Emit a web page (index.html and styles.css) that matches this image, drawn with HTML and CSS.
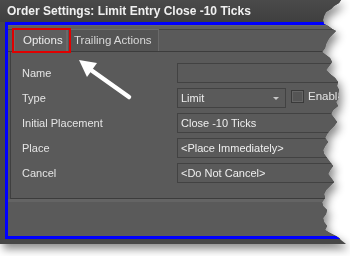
FILE: index.html
```html
<!DOCTYPE html>
<html lang="en">
<head>
    <meta charset="UTF-8">
    <title>Order Settings</title>
    <link rel="stylesheet" href="styles.css">
</head>
<body>
<div class="shot">
    <div class="window">
        <div class="titlebar">Order Settings: Limit Entry Close -10 Ticks</div>
        <div class="frame">
            <div class="tabs">
                <div class="tab active"><span>Options</span></div>
                <div class="tab">Trailing Actions</div>
            </div>
            <div class="panel">
                <div class="row">
                    <label>Name</label>
                    <div class="field"></div>
                </div>
                <div class="row">
                    <label>Type</label>
                    <div class="select">Limit<span class="caret"></span></div>
                    <div class="check"></div>
                    <span class="enable">Enable</span>
                </div>
                <div class="row">
                    <label>Initial Placement</label>
                    <div class="field">Close -10 Ticks</div>
                </div>
                <div class="row">
                    <label>Place</label>
                    <div class="field">&lt;Place Immediately&gt;</div>
                </div>
                <div class="row">
                    <label>Cancel</label>
                    <div class="field">&lt;Do Not Cancel&gt;</div>
                </div>
            </div>
            <div class="footer"></div>
        </div>
    </div>
    <!-- callout arrow pointing at the tab -->
    <svg class="arrow" width="350" height="256" viewBox="0 0 350 256">
        <line x1="129" y1="97" x2="91" y2="70" stroke="#fff" stroke-width="4.5" stroke-linecap="round"/>
        <polygon points="79,60 97,63 87,77" fill="#fff"/>
    </svg>
</div>
</body>
</html>
```

FILE: styles.css
```css
body {
    margin: 0;
    background-color: #FFFFFF;
    font-family: "Liberation Sans", Arial, sans-serif;
}
.shot {
    position: relative;
    width: 350px;
    height: 256px;
    overflow: hidden;
    filter: drop-shadow(3px 5px 4px rgba(0, 0, 0, 0.45));
}
/* torn right edge */
.window {
    width: 346px;
    height: 244px;
    overflow: hidden;
    background-color: #474747;
    clip-path: polygon(0 0, 341px 0, 339px 3px, 334px 6px, 331px 9px, 326px 12px, 324px 16px, 323px 20px, 324px 24px, 328px 26px, 332px 29px, 336px 31px, 333px 34px, 330px 37px, 328px 40px, 326px 44px, 325px 48px, 322px 52px, 326px 55px, 330px 58px, 332px 62px, 329px 66px, 326px 70px, 330px 74px, 335px 78px, 338px 82px, 337px 86px, 339px 90px, 338px 94px, 339px 98px, 336px 102px, 338px 106px, 333px 110px, 331px 114px, 334px 118px, 337px 122px, 334px 126px, 330px 130px, 327px 134px, 325px 138px, 328px 142px, 325px 146px, 323px 150px, 324px 154px, 327px 158px, 330px 162px, 333px 166px, 330px 170px, 328px 174px, 331px 178px, 334px 182px, 330px 186px, 326px 190px, 324px 194px, 325px 198px, 322px 202px, 323px 206px, 327px 210px, 326px 214px, 323px 218px, 324px 222px, 327px 226px, 325px 230px, 330px 233px, 336px 236px, 339px 238px, 341px 240px, 346px 244px, 0 244px);
}
.titlebar {
    height: 22px;
    line-height: 22px;
    padding-left: 7px;
    font-size: 12px;
    font-weight: bold;
    color: #f0f0f0;
    background: linear-gradient(#4a4a4a, #3f3f3f);
    white-space: nowrap;
}
.frame {
    margin-left: 5px;
    width: 345px;
    height: 211px;
    border: 3px solid #0000ff;
    background-color: #5a5a5a;
    display: flex;
    flex-direction: column;
}
.tabs {
    height: 25px;
    display: flex;
    align-items: flex-end;
    padding-left: 6px;
    border-top: 1px solid #666;
    border-bottom: 1px solid #3c3c3c;
    box-shadow: inset 0 3px 0 #5f5f5f, inset 0 4px 0 #444;
}
.tab {
    height: 21px;
    line-height: 21px;
    padding: 0 6px;
    font-size: 11.5px;
    color: #d8d8d8;
    background-color: #545454;
    border: 1px solid #6a6a6a;
    border-bottom: none;
}
.tab.active {
    position: relative;
    width: 43px;
    padding: 0 0 0 8px;
    color: #ececec;
    background-color: #5e5e5e;
}
.tab.active::after {
    content: "";
    position: absolute;
    left: -3px;
    top: -2px;
    width: 55px;
    height: 21px;
    border: 2px solid #e00000;
}
.panel {
    height: 135px;
    margin-left: 2px;
    padding-top: 11px;
    border-left: 1px solid #3f3f3f;
    border-bottom: 1px solid #3c3c3c;
    display: flex;
    flex-direction: column;
    gap: 5px;
}
.row {
    height: 20px;
    display: flex;
    align-items: center;
    font-size: 11px;
    color: #e4e4e4;
}
.row label {
    width: 155px;
    padding-left: 11px;
}
.field, .select {
    height: 18px;
    line-height: 18px;
    padding-left: 3px;
    border: 1px solid #424242;
    color: #eeeeee;
    background-color: #5a5a5a;
}
.field {
    width: 170px;
}
.select {
    width: 104px;
    position: relative;
}
.caret {
    position: absolute;
    right: 6px;
    top: 8px;
    border-left: 3px solid transparent;
    border-right: 3px solid transparent;
    border-top: 3px solid #c8c8c8;
}
.check {
    width: 11px;
    height: 11px;
    margin-left: 5px;
    margin-top: -4px;
    border: 1px solid #3a3a3a;
    background-color: #555;
    box-shadow: inset 0 0 0 1px #666;
}
.enable {
    margin-left: 4px;
    margin-top: -4px;
    font-size: 11.5px;
}
.footer {
    height: 34px;
    border-top: 3px solid #646464;
}
.arrow {
    position: absolute;
    left: 0;
    top: 0;
}
```
